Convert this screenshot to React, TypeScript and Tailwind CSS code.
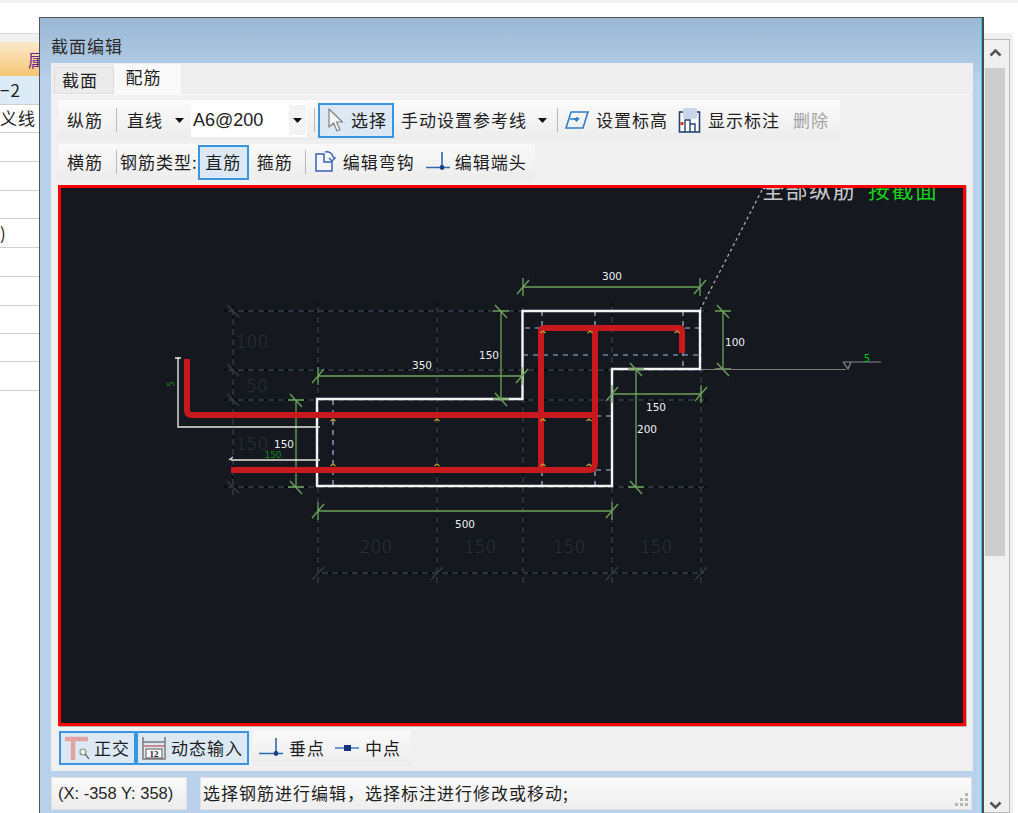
const cjk = { fontFamily: '"Noto Sans CJK SC", "Liberation Sans", sans-serif' };

function Caret({ className = "" }: { className?: string }) {
  return (
    <svg width="9" height="5" viewBox="0 0 9 5" className={className}>
      <path d="M0 0h9L4.5 5z" fill="#111" />
    </svg>
  );
}
const Sep = ({ className = "" }: { className?: string }) => <div className={`w-px h-[24px] bg-[#b9b9b9] ${className}`} />;

function T({ children, className = "" }: { children: React.ReactNode; className?: string }) {
  return <span className={`text-[17px] tracking-[1px] leading-none whitespace-nowrap text-[#1f1f1f] -translate-y-px ${className}`}>{children}</span>;
}

function Dash({ a, b, c, d, base = "#333e4a", over = "#000", dash = "4 6" }: { a: number; b: number; c: number; d: number; base?: string; over?: string; dash?: string }) {
  return (
    <g strokeWidth="1.3">
      <line x1={a} y1={b} x2={c} y2={d} stroke={base} />
      <line x1={a} y1={b} x2={c} y2={d} stroke={over} strokeDasharray={dash} />
    </g>
  );
}

function HDim({ x1, x2, y }: { x1: number; x2: number; y: number }) {
  const t = (x: number) => `M${x} ${y - 9}V${y + 9}M${x - 6} ${y + 7}L${x + 6} ${y - 7}`;
  return <path d={`M${x1} ${y}H${x2}${t(x1)}${t(x2)}`} stroke="#6ca35a" strokeWidth="1.3" fill="none" />;
}
function VDim({ x, y1, y2 }: { x: number; y1: number; y2: number }) {
  const t = (y: number) => `M${x - 8} ${y}H${x + 8}M${x - 6} ${y - 6}L${x + 6} ${y + 7}`;
  return <path d={`M${x} ${y1}V${y2}${t(y1)}${t(y2)}`} stroke="#6ca35a" strokeWidth="1.3" fill="none" />;
}

const numFont = '"DejaVu Sans", sans-serif';
const W = ({ x, y, c }: { x: number; y: number; c: string }) => (
  <text x={x} y={y} fontSize="10.5" fill="#eef1f5" textAnchor="middle" fontFamily={numFont}>{c}</text>
);
const G = ({ x, y, c }: { x: number; y: number; c: string }) => (
  <text x={x} y={y} fontSize="17" fill="#2d3540" textAnchor="middle" fontFamily={numFont} fontWeight="300">{c}</text>
);

const marks: [number, number][] = [
  [333, 420], [437, 420], [543, 420], [589, 420],
  [333, 465], [437, 465], [543, 465], [589, 465],
  [543, 332], [590, 332], [677, 332],
];

function Drawing() {
  return (
    <svg viewBox="61 188 902 535" width="902" height="535" className="block">
      {[311, 370, 400, 487].map((y) => <Dash key={y} a={224} b={y} c={708} d={y} />)}
      <Dash a={318} b={573} c={704} d={573} />
      <Dash a={233} b={305} c={233} d={495} />
      {[318, 437, 523, 612, 701].map((x) => <Dash key={x} a={x} b={303} c={x} d={583} />)}
      {[311, 370, 400, 487].map((y) => <path key={y} d={`M227 ${y + 6}L239 ${y - 6}`} transform={`rotate(90 233 ${y})`} stroke="#333e4a" strokeWidth="1.2" />)}
      {[318, 437, 612, 701].map((x) => <path key={x} d={`M${x - 6} 580L${x + 6} 567`} stroke="#333e4a" strokeWidth="1.2" />)}
      <G x={252} y={348} c="100" /><G x={257} y={392} c="50" /><G x={252} y={450} c="150" />
      <G x={376} y={553} c="200" /><G x={480} y={553} c="150" /><G x={569} y={553} c="150" /><G x={656} y={553} c="150" />

      <g stroke="#9dbfe0" strokeWidth="1.2" strokeDasharray="5 5">
        <path d="M333 400V486M542 311V486M595 311V486M683 311V369M525 328H700M523 355H700M596 416H612M596 470H612" />
      </g>
      <path d="M700 310L762 190" stroke="#b5b5b5" strokeWidth="1.2" strokeDasharray="3 3" />
      <polygon points="317,399 522.5,399 522.5,311 700,311 700,369 612,369 612,486 317,486" fill="none" stroke="#f4f4f4" strokeWidth="2.4" />

      <HDim x1={318} x2={522} y={376} />
      <HDim x1={318} x2={612} y={511} />
      <HDim x1={523} x2={700} y={287} />
      <HDim x1={612} x2={701} y={394} />
      <VDim x={296} y1={400} y2={487} />
      <VDim x={501} y1={311} y2={399} />
      <VDim x={723} y1={311} y2={369} />
      <VDim x={636} y1={369} y2={487} />

      <path d="M178 357V427H320M231 460H320M175 358H181M229 460L233 457" stroke="#e6e6e0" strokeWidth="1.4" fill="none" />
      <g stroke="#c8191e" strokeWidth="6" fill="none" strokeLinejoin="round">
        <path d="M187 359V410Q187 415 192 415H596" />
        <path d="M231 470H588Q595 470 595 463V328" />
        <path d="M541 470V331Q541 328 544 328H679Q682 328 682 331V353" />
      </g>
      {marks.map(([x, y]) => <path key={`${x}-${y}`} d={`M${x - 2.5} ${y + 1}L${x} ${y - 1}L${x + 2.5} ${y + 1}`} stroke="#c9a227" strokeWidth="1.3" fill="none" />)}

      <W x={422} y={369} c="350" /><W x={465} y={528} c="500" /><W x={612} y={280} c="300" />
      <W x={284} y={448} c="150" /><W x={489} y={359} c="150" /><W x={735} y={346} c="100" />
      <W x={656} y={411} c="150" /><W x={647} y={433} c="200" />
      <text x={273} y={458} fontSize="9" fill="#0d8a18" textAnchor="middle" fontFamily={numFont}>150</text>
      <text x={176} y={386} fontSize="8" fill="#0d8a18" textAnchor="middle" fontFamily={numFont} transform="rotate(-90 174 386)">5</text>

      <path d="M701 369.5H846" stroke="#7d7d7d" strokeWidth="1.2" />
      <path d="M843 362H881M843 362L848 369L851 362" stroke="#8a8a8a" strokeWidth="1.2" fill="none" />
      <text x={867} y={362} fontSize="10" fill="#0cc414" textAnchor="middle" fontFamily={numFont}>5</text>

      <text x={762} y={198} fontSize="22" fill="#c9c9c9" letterSpacing="1.5" style={cjk}>全部纵筋</text>
      <text x={868} y={198} fontSize="22" fill="#18d018" letterSpacing="1.5" style={cjk}>按截面</text>
    </svg>
  );
}

export default function App() {
  const rows = [
    { t: "−2", h: 29, c: "bg-[#dcebf8]" }, { t: "义线", h: 28 }, { t: "", h: 29 }, { t: "", h: 29 }, { t: "", h: 28 },
    { t: ")", h: 29 }, { t: "", h: 29 }, { t: "", h: 29 }, { t: "", h: 28 }, { t: "", h: 28 }, { t: "", h: 29 },
  ];
  return (
    <div className="w-[1018px] h-[813px] overflow-hidden bg-white flex flex-col" style={cjk}>
      <div className="h-[3px] bg-[#f0f0f0] shrink-0" />
      <div className="flex flex-1 min-h-0">
        {/* background table */}
        <div className="w-[39px] shrink-0 pt-[30px]">
          <div className="h-[9px] bg-[#f0f0f0] border-t border-[#dcdcdc]" />
          <div className="h-[34px] bg-gradient-to-b from-[#fbe9cc] to-[#f5c66f] overflow-hidden flex justify-start pl-[28px] items-center">
            <span className="text-[17px] leading-none text-[#6b1f8a] whitespace-nowrap">属</span>
          </div>
          {rows.map((r, i) => (
            <div key={i} style={{ height: r.h }} className={`border-b border-[#cfcfcf] flex items-center overflow-hidden ${r.c ?? "bg-white"}`}>
              <T className="tracking-[0px]">{r.t}</T>
            </div>
          ))}
        </div>

        {/* dialog */}
        <div className="w-[945px] shrink-0 mt-[14px] mb-[-4px] border border-[#555] border-r-2 border-r-[#4a4a4a] bg-gradient-to-b from-[#9ab7d4] via-[#b9d1ea] via-[8%] to-[#b9d1ea] flex flex-col shadow-[inset_-1px_0_0_#35c4e8]">
          <div className="h-[45px] shrink-0 pl-[11px] pt-[20px]">
            <T className="text-[#2a2a2a] block">截面编辑</T>
          </div>
          <div className="ml-[11px] w-[922px] flex-1 flex flex-col min-h-0">
            <div className="bg-[#eeeeee] pl-px pr-[3px] pb-[1px] h-[708px] flex flex-col">
              <div className="h-[31px] flex items-end shrink-0 pl-[2px]">
                <div className="w-[60px] h-[27px] bg-[#ebebeb] border border-[#dedede] flex items-center justify-center pr-[8px]"><T>截面</T></div>
                <div className="w-[67px] h-[30px] bg-[#f9f9f9] flex items-center justify-center pb-[3px] pr-[8px]"><T>配筋</T></div>
              </div>
              <div className="flex-1 bg-[#f0f0f0] border-t border-[#fafafa] flex flex-col pl-[6px]">
                {/* row 1 */}
                <div className="mt-[5px] h-[40px] w-[782px] bg-gradient-to-b from-[#fbfbfb] to-[#ececec] flex items-center rounded-[2px]">
                  <T className="ml-[9px]">纵筋</T>
                  <Sep className="ml-[13px]" />
                  <T className="ml-[10px]">直线</T>
                  <Caret className="ml-[12px]" />
                  <div className="ml-[7px] w-[116px] h-[34px] bg-white flex items-center relative">
                    <span className="ml-[2px] text-[18px] leading-none text-[#222]" style={{ fontFamily: '"Liberation Sans", sans-serif' }}>A6@200</span>
                    <div className="ml-auto w-[17px] h-[30px] bg-[#f3f3f3] flex items-center justify-center mr-px"><Caret /></div>
                  </div>
                  <Sep className="ml-[7px]" />
                  <div className="ml-[3px] w-[76px] h-[35px] border-2 border-[#3b94e0] bg-[#dce9f5] flex items-center pl-[6px]">
                    <svg width="20" height="26" viewBox="0 0 20 26"><path d="M3 2V20L7.5 16L11 24L14 22.5L10.5 15H16.5Z" fill="#f5f5f5" stroke="#808080" strokeWidth="1.2" strokeLinejoin="round" /></svg>
                    <T className="ml-[5px]">选择</T>
                  </div>
                  <T className="ml-[7px]">手动设置参考线</T>
                  <Caret className="ml-[11px]" />
                  <Sep className="ml-[10px]" />
                  <svg className="ml-[7px]" width="24" height="20" viewBox="0 0 24 20"><path d="M6 2H23L18 18H1ZM5 9H12M12 7V11" fill="none" stroke="#2f7fc9" strokeWidth="1.6" /><path d="M8 8H15L11.5 12Z" fill="#2f7fc9" /></svg>
                  <T className="ml-[7px]">设置标高</T>
                  <svg className="ml-[10px]" width="23" height="26" viewBox="0 0 23 26"><rect x="1.5" y="5" width="20" height="20" fill="#fff" stroke="#24446e" strokeWidth="1.6" /><rect x="5" y="1" width="14" height="11" rx="2" fill="#c9d6ea" /><path d="M7 25V13H12V25M12 17H17V25" fill="none" stroke="#24446e" strokeWidth="1.4" /><rect x="2.5" y="15" width="3" height="3" fill="#d9381e" /></svg>
                  <T className="ml-[7px]">显示标注</T>
                  <T className="ml-[13px] text-[#a3a3a3]">删除</T>
                </div>
                {/* row 2 */}
                <div className="mt-[4px] h-[36px] w-[477px] bg-gradient-to-b from-[#fafafa] to-[#ececec] flex items-center rounded-[2px]">
                  <T className="ml-[9px]">横筋</T>
                  <Sep className="ml-[13px]" />
                  <T className="ml-[3px] tracking-[0.7px]">钢筋类型:</T>
                  <div className="w-[51px] h-[35px] border-2 border-[#3b94e0] bg-[#dce9f5] flex items-center justify-center"><T>直筋</T></div>
                  <T className="ml-[8px]">箍筋</T>
                  <Sep className="ml-[12px]" />
                  <svg className="ml-[8px]" width="23" height="24" viewBox="0 0 23 24"><path d="M2 4H10V12H18V21H2Z" fill="#f3f6fb" stroke="#3a62b8" strokeWidth="1.5" /><path d="M11 2C15 1 18 3 19 7L21 8L18 11L15 8" fill="none" stroke="#3a62b8" strokeWidth="1.4" /></svg>
                  <T className="ml-[6px]">编辑弯钩</T>
                  <svg className="ml-[10px]" width="26" height="24" viewBox="0 0 26 24"><path d="M1 17.5H25M17 2V17" stroke="#2f67b5" strokeWidth="1.6" fill="none" /><circle cx="17" cy="17.5" r="2.4" fill="#1e3f80" /></svg>
                  <T className="ml-[4px]">编辑端头</T>
                </div>
                {/* canvas */}
                <div className="mt-[5px] w-[908px] h-[541px] shrink-0 border-[3px] border-[#ff0000] bg-[#15181f] overflow-hidden shadow-[1px_1px_0_#b5b5b5]">
                  <Drawing />
                </div>
                {/* bottom toolbar */}
                <div className="mt-[4px] h-[36px] flex items-center">
                  <div className="ml-px w-[77px] h-[34px] border-2 border-[#3b94e0] bg-[#dce9f5] flex items-center pl-[3px]">
                    <svg width="28" height="26" viewBox="0 0 28 26"><path d="M1 4H24M9 4V25" stroke="#e3a3a3" strokeWidth="4.5" fill="none" /><circle cx="19" cy="17" r="3" fill="#f3f3f3" stroke="#888" strokeWidth="1.2" /><path d="M21 19L25 24" stroke="#777" strokeWidth="1.6" /></svg>
                    <T className="ml-[2px]">正交</T>
                  </div>
                  <div className="w-[113px] h-[34px] border-2 border-[#3b94e0] bg-[#dce9f5] flex items-center pl-[3px]">
                    <svg width="26" height="26" viewBox="0 0 26 26"><path d="M2 2V24H24V2M2 7H24" stroke="#7b7b7b" strokeWidth="1.5" fill="none" /><path d="M2 11H24" stroke="#c46b6b" strokeWidth="1.5" /><rect x="5" y="14" width="16" height="9" fill="#fff" stroke="#555" /><text x="13" y="22" fontSize="9" fontWeight="700" textAnchor="middle" fill="#222" fontFamily="Liberation Serif, serif">12</text></svg>
                    <T className="ml-[4px]">动态输入</T>
                  </div>
                  <div className="ml-[4px] w-[157px] h-[36px] bg-gradient-to-b from-[#fafafa] to-[#ececec] flex items-center rounded-[2px]">
                    <svg className="ml-[5px]" width="26" height="24" viewBox="0 0 26 24"><path d="M1 17.5H25M18 2V17" stroke="#2f67b5" strokeWidth="1.6" fill="none" /><circle cx="18" cy="17.5" r="2.4" fill="#1e3f80" /></svg>
                    <T className="ml-[5px]">垂点</T>
                    <svg className="ml-[10px]" width="24" height="10" viewBox="0 0 24 10"><path d="M0 5H24" stroke="#4a80c8" strokeWidth="1.6" /><rect x="9" y="2" width="7" height="6" fill="#16337d" /></svg>
                    <T className="ml-[6px]">中点</T>
                  </div>
                </div>
              </div>
            </div>
            {/* status */}
            <div className="mt-[6px] h-[33px] flex gap-[13px] pr-px">
              <div className="w-[136px] bg-gradient-to-b from-[#fafafa] to-[#ececec] border border-[#e2e2e2] flex items-center pl-[6px]">
                <span className="text-[16.5px] leading-none text-[#262626] whitespace-nowrap" style={{ fontFamily: '"Liberation Sans", sans-serif' }}>(X: -358 Y: 358)</span>
              </div>
              <div className="flex-1 bg-gradient-to-b from-[#fbfbfb] to-[#eeeeee] border border-[#e2e2e2] flex items-center pl-[2px] relative">
                <T>选择钢筋进行编辑，选择标注进行修改或移动;</T>
                <svg className="absolute right-[2px] bottom-[2px]" width="16" height="16" viewBox="0 0 16 16" fill="#b5b5b5"><rect x="12" y="2" width="3" height="3" /><rect x="7" y="7" width="3" height="3" /><rect x="12" y="7" width="3" height="3" /><rect x="2" y="12" width="3" height="3" /><rect x="7" y="12" width="3" height="3" /><rect x="12" y="12" width="3" height="3" /></svg>
              </div>
            </div>
          </div>
        </div>

        {/* scrollbar */}
        <div className="w-[29px] shrink-0 pt-[30px] flex flex-col bg-white">
          <div className="flex-1 bg-[#f0f0f0] pt-[6px] pr-[3px] flex flex-col">
            <div className="w-[26px] flex-1 border border-[#b7b7b7] border-l-0 bg-[#f0f0f0] flex flex-col items-center pr-[3px]">
              <svg className="mt-[8px] shrink-0" width="13" height="9" viewBox="0 0 13 9"><path d="M1.5 7.5L6.5 2.5L11.5 7.5" stroke="#555" strokeWidth="2.6" fill="none" /></svg>
              <div className="mt-[11px] h-[488px] w-[20px] bg-[#cdcdcd] shrink-0" />
              <div className="flex-1" />
              <svg className="mb-[2px] shrink-0" width="13" height="9" viewBox="0 0 13 9"><path d="M1.5 1.5L6.5 6.5L11.5 1.5" stroke="#555" strokeWidth="2.6" fill="none" /></svg>
            </div>
          </div>
        </div>
      </div>
    </div>
  );
}
